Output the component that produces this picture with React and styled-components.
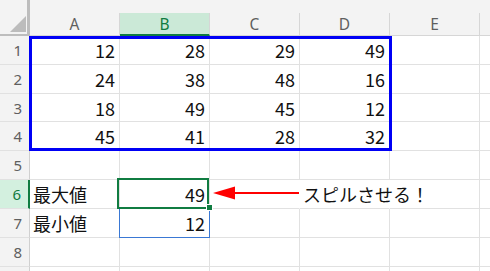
import React from 'react'
import styled, { createGlobalStyle } from 'styled-components'

const GlobalStyle = createGlobalStyle`
  html, body {
    margin: 0;
    padding: 0;
    background: #ffffff;
  }
  body {
    font-family: "Noto Sans CJK JP", "Noto Sans", sans-serif;
  }
`

const COLUMNS = ['A', 'B', 'C', 'D', 'E', 'F']
const ACTIVE_COL = 'B'
const ACTIVE_ROW = 6

// row number, height, and its cells by column letter
const ROWS = [
  { n: 1, h: 29, cells: { A: 12, B: 28, C: 29, D: 49 } },
  { n: 2, h: 29, cells: { A: 24, B: 38, C: 48, D: 16 } },
  { n: 3, h: 28, cells: { A: 18, B: 49, C: 45, D: 12 } },
  { n: 4, h: 29, cells: { A: 45, B: 41, C: 28, D: 32 } },
  { n: 5, h: 29, cells: {} },
  { n: 6, h: 29, cells: { A: '最大値', B: 49, D: 'スピルさせる！' }, noRightLine: ['C', 'D'] },
  { n: 7, h: 29, cells: { A: '最小値', B: 12 } },
  { n: 8, h: 29, cells: {} },
  { n: 9, h: 29, cells: {} },
]

const Sheet = styled.div`
  position: relative;
  width: 490px;
  height: 271px;
  overflow: hidden;
  display: grid;
  grid-template-columns: 30px repeat(5, 90px) 60px;
  grid-template-rows: 36px ${ROWS.map(r => `${r.h}px`).join(' ')};
  background: #ffffff;
`

const Corner = styled.div`
  box-sizing: border-box;
  background: #f3f3f3;
  border-right: 3px solid #bdbdbd;
  border-bottom: 2px solid #bdbdbd;
  display: flex;
  align-items: flex-end;
  justify-content: flex-end;
  padding: 0 1px 2px 0;
`

const ColHeader = styled.div`
  background: #f3f3f3;
  display: flex;
  align-items: flex-end;
`

const ColLabel = styled.div`
  box-sizing: border-box;
  width: 100%;
  height: 23px;
  display: flex;
  align-items: center;
  justify-content: center;
  font-family: "Noto Sans", "Liberation Sans", sans-serif;
  font-size: 15.5px;
  color: ${p => (p.$active ? '#107c41' : '#5f5f5f')};
  background: ${p => (p.$active ? '#cbe9d7' : 'transparent')};
  border-right: 1px solid #d6d6d6;
  border-bottom: ${p => (p.$active ? '2px solid #107c41' : '1px solid #d6d6d6')};
`

const RowHeader = styled.div`
  box-sizing: border-box;
  display: flex;
  align-items: center;
  justify-content: flex-end;
  padding-right: 7px;
  font-family: "Noto Sans", "Liberation Sans", sans-serif;
  font-size: 15px;
  color: ${p => (p.$active ? '#107c41' : '#5f5f5f')};
  background: ${p => (p.$active ? '#d3f0df' : '#f3f3f3')};
  border-right: ${p => (p.$active ? '2px solid #107c41' : '1px solid #d0d0d0')};
  border-bottom: 1px solid #e1e1e1;
`

const Cell = styled.div`
  box-sizing: border-box;
  display: flex;
  align-items: center;
  justify-content: ${p => (p.$num ? 'flex-end' : 'flex-start')};
  padding: 0 4px 0 3px;
  white-space: nowrap;
  overflow: visible;
  font-size: 18px;
  color: #111111;
  border-right: 1px solid ${p => (p.$noLine ? 'transparent' : '#e1e1e1')};
  border-bottom: 1px solid #e1e1e1;
`

const RangeBox = styled.div`
  position: absolute;
  box-sizing: border-box;
  pointer-events: none;
  left: ${p => p.$x}px;
  top: ${p => p.$y}px;
  width: ${p => p.$w}px;
  height: ${p => p.$h}px;
  border: ${p => p.$border};
`

const FillHandle = styled.div`
  position: absolute;
  left: 206px;
  top: 204px;
  width: 7px;
  height: 7px;
  box-sizing: border-box;
  background: #107c41;
  border: 1px solid #ffffff;
`

const Arrow = styled.svg`
  position: absolute;
  left: 212px;
  top: 185px;
  overflow: visible;
`

const CornerTriangle = () => (
  <svg width="16" height="16" viewBox="0 0 16 16">
    <polygon points="0,16 16,16 16,0" fill="#bcbcbc" />
  </svg>
)

const App = () => {
  return (
    <>
      <GlobalStyle />
      <Sheet>
        <Corner>
          <CornerTriangle />
        </Corner>
        {COLUMNS.map(c => (
          <ColHeader key={c}>
            <ColLabel $active={c === ACTIVE_COL}>{c}</ColLabel>
          </ColHeader>
        ))}

        {ROWS.map(row => (
          <React.Fragment key={row.n}>
            <RowHeader $active={row.n === ACTIVE_ROW}>{row.n}</RowHeader>
            {COLUMNS.map(c => {
              const v = row.cells[c]
              return (
                <Cell
                  key={c}
                  $num={typeof v === 'number'}
                  $noLine={row.noRightLine && row.noRightLine.includes(c)}
                >
                  {v}
                </Cell>
              )
            })}
          </React.Fragment>
        ))}

        {/* A1:D4 blue frame */}
        <RangeBox $x={29} $y={36} $w={363} $h={115} $border="3px solid #0000f5" />
        {/* formula reference B7 */}
        <RangeBox $x={119} $y={208} $w={91} $h={30} $border="1px solid #3a78d4" />
        {/* active cell B6 */}
        <RangeBox $x={117} $y={178} $w={92} $h={31} $border="2px solid #107c41" />
        <FillHandle />

        <Arrow width="88" height="16" viewBox="0 0 88 16">
          <line x1="20" y1="8" x2="87" y2="8" stroke="#ff0000" strokeWidth="2.2" />
          <polygon points="1,8 23,1.5 23,14.5" fill="#ff0000" />
        </Arrow>
      </Sheet>
    </>
  )
}

export default App
